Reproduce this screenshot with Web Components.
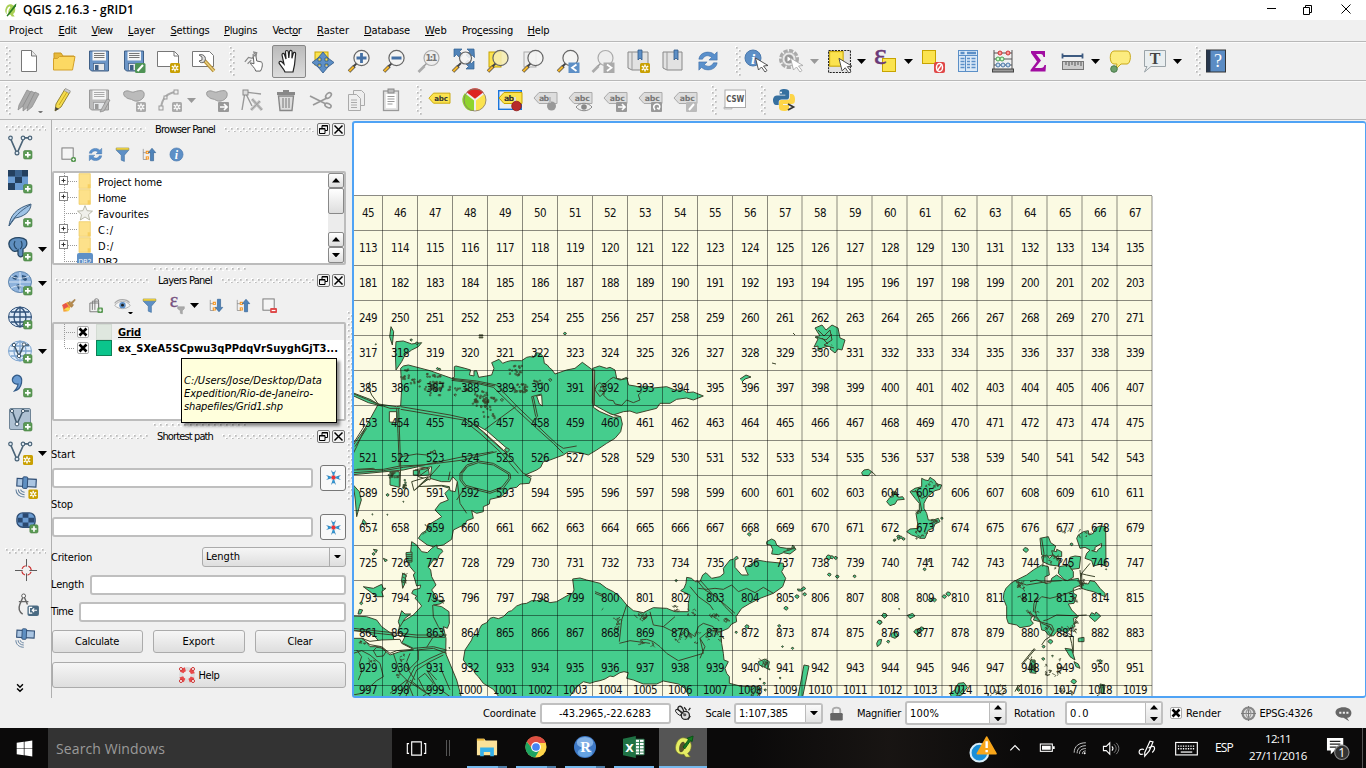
<!DOCTYPE html>
<html lang="en">
<head>
<meta charset="utf-8">
<title>QGIS 2.16.3 - gRID1</title>
<style>
html,body{margin:0;padding:0;width:1366px;height:768px;overflow:hidden;background:#f0f0f0}
</style>
</head>
<body>
<qgis-desktop></qgis-desktop>
<script>
/* ---------- icon library, 24 x 24 units ---------- */
const plus='<rect x="15.5" y="15.5" width="8.5" height="8.5" rx="1.5" fill="#5b9a55" stroke="#47803f" stroke-width=".6"/><path d="M19.8 17v5.600M17 19.800h5.600" stroke="#fff" stroke-width="1.700"/>';
const star='<rect x="14" y="14" width="10" height="10" rx="1.5" fill="#c9a002"/><path d="M19 15.500v7M15.800 17.200l6.400 3.600M15.800 20.800l6.400-3.600" stroke="#fff" stroke-width="1.500"/><circle cx="19" cy="19" r="1" fill="#c9a002"/>';
const gstar=star.replace(/#c9a002/g,'#aaa');
const lens=(h='#f2b52a',ex='',f='#f4f4f2',s='#666')=>`<path d="M2 22.500l5.500-5.500" stroke="#444" stroke-width="3.400"/><path d="M2.200 22.300l4.500-4.500" stroke="${h}" stroke-width="2.200"/><path d="M7 17l3-3" stroke="#444" stroke-width="1.800"/><circle cx="14.500" cy="9" r="7.600" fill="${f}" fill-opacity=".88" stroke="${s}" stroke-width="1.200"/>${ex}`;
const glens=(ex)=>`<path d="M1.500 23l6-6" stroke="#aaa" stroke-width="2.600"/><path d="M7 17l3-3" stroke="#999" stroke-width="1.500"/><circle cx="14.500" cy="9" r="7.500" fill="#eee" stroke="#aaa" stroke-width="1.200"/>${ex}`;
const floppy=(a,b,c)=>`<path d="M2.500 2h19v20H4.500l-2-2z" fill="${a}" stroke="${b}"/><rect x="5.500" y="2.500" width="13.500" height="9" fill="#f5f5f5"/><path d="M7 4.500h10.500M7 6.500h10.500M7 8.500h10.500" stroke="${c}" stroke-width="1"/><rect x="6.500" y="14.500" width="11" height="7" fill="#e6e8ea" stroke="${b}" stroke-width=".7"/><rect x="8" y="16" width="3.500" height="5" fill="${b}"/>`;
const tag=(f,s,t,txt='abc')=>`<path d="M1 11.500l5-5.500h18v11H6z" transform="translate(0 -1.500)" fill="${f}" stroke="${s}" stroke-width="1"/><text x="${txt=='abc'?14.300:11}" y="13" text-anchor="middle" font-family="DejaVu Sans,sans-serif" font-weight="bold" font-size="7.800" textLength="${txt=='abc'?15:10}" fill="${t}">${txt}</text>`;
const gtag=(t='abc')=>tag('#ddd','#aaa','#777',t);
const cursor='<path d="M11.500 9l3 12 3-3 3.500 5 2-1.500-3.500-4.500 4.500-.5z" fill="#fff" stroke="#444" stroke-width=".9"/>';
const vect='<path d="M2.500 3.500l6.500 15L15 5M15.500 2.800h6" fill="none" stroke="#4b6478" stroke-width="1.700"/><g fill="#dfe9f2" stroke="#4b6478" stroke-width="1.200"><circle cx="2.500" cy="3" r="1.800"/><circle cx="9" cy="18" r="1.900"/><circle cx="15" cy="3" r="1.800"/><circle cx="22" cy="3" r="1.800"/></g>';
const arrowBlue='<path d="M16 2l6 7h-3.500v13h-5V9H10z" fill="#4f83b9" stroke="#2f5f90"/>';
const treeBits='<path d="M2 3v17h6M2 9h6" stroke="#777" fill="none"/><rect x="6" y="6" width="5" height="5" fill="#f7941d"/><rect x="6" y="15" width="5" height="5" fill="#f7941d"/><circle cx="8.500" cy="8.500" r="1" fill="#fff"/><circle cx="8.500" cy="17.500" r="1" fill="#fff"/>';
const sat='<g transform="rotate(3 12 8)"><rect x="2" y="3" width="20" height="8" fill="#aac5e2" stroke="#2f4e75" stroke-width="1.200"/><rect x="8" y="1" width="5" height="12" rx="1" fill="#5e8fc2" stroke="#2f4e75"/></g><path d="M1 14c0 5 4 8 9 8M3.500 14c0 3 3 5.500 6.500 5.500M6 14c0 1.500 2 3 4 3" fill="none" stroke="#5f7d9c" stroke-width="1.100"/>';
const globe=(f,s)=>`<ellipse cx="12" cy="12" rx="11.500" ry="10" fill="${f}" stroke="${s}"/><path d="M12 2v20M1 12h22M3 7h18M3 17h18M12 2c-8 5-8 15 0 20M12 2c8 5 8 15 0 20" fill="none" stroke="${s}" stroke-width="1.300"/>`;
const hand='<path d="M8 23c-1-3-5-7-6-9 0-2 2-2 3-1l2 2-2-9c0-2 2-2 2.500-.5L9 10 8.500 3c0-2 2.500-2 2.800 0l.5 6 .7-6.500c.3-1.800 2.600-1.500 2.600.3l-.2 6.500 1.400-5c.6-1.500 2.500-1 2.300.7L17.500 16 16 23z" fill="#fff" stroke="#222" stroke-width="1.200"/>';
const ICONS={
logo:'<path d="M12 2c6 0 9 4 9 9 0 4-2 7-4 8l3 4h-5l-2-3C6 21 3 16 4 11s4-9 8-9z" fill="#a9cf55"/><path d="M9 19C6 17 8 9 12 7" stroke="#fff" stroke-width="3" fill="none"/><path d="M6 22L20 3l3-2-1 5L8 23z" fill="#287a20"/>',
new:'<path d="M4.500 1.500h10l5 5.500v15.500h-15z" fill="#fff" stroke="#777"/><path d="M14.500 1.500v5.500h5" fill="#e8e8e8" stroke="#777"/>',
open:'<path d="M2 4h7l2 3h11v5H2z" fill="#e7b83a" stroke="#c9971f"/><path d="M1.500 21V9.500h4l2-2H23l-2.500 13.500z" fill="#fcd963" stroke="#d3a02a"/>',
save:floppy('#6b95c7','#3f5f86','#777'),
saveas:floppy('#6b95c7','#3f5f86','#777')+'<rect x="13" y="14" width="10.500" height="10" rx="1.500" fill="#4e9355"/><path d="M15.500 22l5.500-6" stroke="#fff" stroke-width="2"/>',
composer:'<path d="M1.500 2.500h17l4 4v11h-21z" fill="#fff" stroke="#777"/><path d="M18 2.500v4.500h4.500" fill="none" stroke="#777"/>'+star,
manager:'<path d="M1.500 2.500h17l4 4v11h-21z" fill="#fff" stroke="#777"/><path d="M12 10l11 12" stroke="#b58e35" stroke-width="3.600"/><path d="M13 11l10 11" stroke="#e8cf7e" stroke-width="1.500"/><path d="M8 6c3-1 5 0 6 2s0 4-1 5-4 1-5-1l3-1V8z" fill="#ddd" stroke="#666"/>',
touch:'<path d="M13 23c-1-4-5-6-6-9l4 1L10 5c1-2 3-1 3 1l1 6 5 1c2 1 1 7-1 10z" transform="translate(1)" fill="#fff" stroke="#555"/><path d="M2 13l4-5 4 1 5-6M5 15l4-4M11 2l4 1-1 4" fill="none" stroke="#888" stroke-width="1.300"/>',
pan:hand,
move:'<rect x="4" y="3" width="13" height="13" fill="#fbe34f" stroke="#c7a400"/><path d="M12 3l5 6h-3v3h3V9l6 4.500-6 4.500v-3h-3v3h3l-5 6-5-6h3v-3H7v3L1 13.500 7 9v3h3V9H7z" fill="#5d8fc6" stroke="#2f5888" stroke-width=".8"/>',
zin:lens('#f2b52a','<path d="M14.500 4v10M9.500 9h10" stroke="#4470a5" stroke-width="2.800"/>'),
zout:lens('#f2b52a','<path d="M9.500 9h10" stroke="#4470a5" stroke-width="3"/>'),
z11:glens('<text x="14.500" y="12.300" text-anchor="middle" font-family="DejaVu Sans,sans-serif" font-weight="bold" font-size="8.500" textLength="12" fill="#777">1:1</text>'),
zfull:'<path d="M4 0h7L8.500 2.500 12 6l-3 3-3.500-3.500L3 8V0zM23 0h-7l2.500 2.500L15 6l3 3 3-3 2.500 2.500zM23 20h-8l2.500-2.500L14 14l3-3 3.500 3.500L23 12z" fill="#5083b8" stroke="#2f5f90" stroke-width=".7"/>'+lens().replace('r="7.600"','r="6"'),
zsel:'<rect x="3" y="3" width="12" height="15" fill="#fbe34f" stroke="#c7a400"/>'+lens('#f2b52a','','#f6edb0'),
zlay:'<rect x="3" y="3" width="12" height="15" fill="#eee" stroke="#aaa"/>'+lens(),
zlast:lens('#f2b52a','<rect x="12.500" y="13.500" width="11" height="10.500" fill="#5d8fc6"/><path d="M20.500 15.500l-4.500 3.300 4.500 3.300" fill="none" stroke="#fff" stroke-width="1.800"/>'),
znext:glens('<rect x="12.500" y="13.500" width="11" height="10.500" fill="#aaa"/><path d="M16 15.500l4.500 3.300-4.500 3.300" fill="none" stroke="#fff" stroke-width="1.800"/>'),
bnew:'<path d="M2 3h20v18H6l-4-2z" fill="#e2e2e2" stroke="#888"/><path d="M6 3v18" stroke="#999"/><path d="M12 1h4v10l-2-2-2 2z" fill="#5d8fc6" stroke="#2f5888" stroke-width=".8"/>'+star,
book:'<path d="M2 3h19v18H6l-4-2z" fill="#e2e2e2" stroke="#888"/><path d="M6 3v18" stroke="#999"/><path d="M13 1h4v10l-2-2-2 2z" fill="#5d8fc6" stroke="#2f5888" stroke-width=".8"/>',
refresh:'<path d="M2 10C3 2 14 0 19 5l3-3v9h-9l3-3C12 5 8 6 6 10zM22 14c-1 8-12 10-17 5l-3 3v-9h9l-3 3c4 3 8 2 10-2z" fill="#5a90cc" stroke="#3c6ba1" stroke-width=".6"/>',
ident:'<circle cx="9" cy="9" r="8" fill="#5d8fc6" stroke="#4a79ad"/><text x="9" y="14.500" text-anchor="middle" font-family="Liberation Serif,serif" font-weight="bold" font-style="italic" font-size="15" fill="#fff">i</text>'+cursor,
action:'<circle cx="10" cy="10" r="8.500" fill="none" stroke="#aaa" stroke-width="3" stroke-dasharray="4.200 1.500"/><circle cx="10" cy="10" r="7" fill="#e8e8e8" stroke="#aaa"/><circle cx="10" cy="10" r="4.500" fill="#999"/><path d="M8.500 7.500v5l4-2.500z" fill="#fff"/>'+cursor.replace('#444','#aaa'),
select:'<rect x="1.500" y="1.500" width="21" height="21" fill="#e2e2e2" stroke="#222" stroke-dasharray="2 1"/><rect x="2.500" y="2.500" width="13" height="14" fill="#fbe34f" stroke="#c7a400"/>'+cursor,
expr:'<rect x="9.500" y="9.500" width="13" height="13" fill="#fbe34f" stroke="#c7a400"/><text x="1" y="14.500" font-family="Liberation Serif,serif" font-size="30" stroke="#6a3a78" stroke-width=".5" fill="#6a3a78">ε</text>',
desel:'<rect x="1.500" y="1.500" width="13" height="13" fill="#fbe34f" stroke="#c7a400"/><rect x="13" y="13" width="11" height="11" rx="2" fill="#e04848"/><ellipse cx="18.500" cy="18.500" rx="3" ry="4" fill="none" stroke="#fff" stroke-width="1.500"/><path d="M16 22l5-7" stroke="#fff" stroke-width="1.300"/>',
table:'<rect x="2.500" y="1.500" width="19" height="21" fill="#dbe9f7" stroke="#5b8fc7"/><path d="M2.500 6.500h19M9.500 6.500v16" stroke="#5b8fc7"/><path d="M4.500 4h4M11 4h9" stroke="#5b8fc7" stroke-width="2.400"/><path d="M4.500 9.500h4M4.500 12.500h4M4.500 15.500h4M4.500 18.500h4M11 9.500h3M15.500 9.500h4M11 12.500h3M15.500 12.500h4M11 15.500h3M15.500 15.500h4M11 18.500h3M15.500 18.500h4" stroke="#5b8fc7" stroke-width="1.300"/>',
abacus:'<path d="M3 1v20M21 1v20M3 4h18M3 10h18M3 16h18" stroke="#555" fill="none"/><rect x="1.500" y="20" width="21" height="3" fill="#999" stroke="#444"/><g stroke="#c33" fill="#f99"><circle cx="9" cy="4" r="2"/><circle cx="17" cy="4" r="2"/></g><g stroke="#4a9b50" fill="#cfc"><circle cx="7" cy="10" r="2"/><circle cx="11" cy="10" r="2"/></g><g stroke="#4a76a8" fill="#cde"><circle cx="7" cy="16" r="2"/><circle cx="12" cy="16" r="2"/><circle cx="17" cy="16" r="2"/></g>',
sigma:'<path d="M5 2h14v6h-1.500c-.5-2-1-3-3-3H10l5 6.500L9 19h6c2 0 3-1 3.500-3H20l-.5 6.500H4.500V21L11 12.500 5 4z" fill="#a10da1"/>',
ruler:'<path d="M1.500 7h20M1.500 4.500v5M21.500 4.500v5" stroke="#3d5a80" stroke-width="1.800"/><rect x="1.500" y="12.500" width="21" height="8" fill="#ccc" stroke="#777"/><path d="M5 13v3M8 13v4M11 13v3M14 13v4M17 13v3M20 13v4" stroke="#555"/>',
tip:'<path d="M6 2h13c5 0 4 13 0 13h-6l-5 5 1-5H6c-5 0-5-13 0-13z" fill="#fcec7f" stroke="#c9a91a"/><circle cx="6" cy="20" r="3.300" fill="#6c9f6c" stroke="#4b7b4b"/>',
annot:'<path d="M1.500 1.500h21v16H8L1.500 23l2.500-5.500H1.500z" fill="#e9eef0" stroke="#9aa3a8"/><text x="12" y="15" text-anchor="middle" font-family="Liberation Serif,serif" font-weight="bold" font-size="16" fill="#444">T</text>',
help:'<rect x="2.500" y="1" width="19" height="22" fill="#5b8cc4" stroke="#333"/><rect x="2.500" y="1" width="4" height="22" fill="#26364c"/><text x="14" y="18" text-anchor="middle" font-family="Liberation Serif,serif" font-size="18" fill="#fff">?</text>',
edits:'<g fill="#aaa" stroke="#888" stroke-width=".7"><path d="M2 17L10 2l4 2-8 14-5 4z"/><path d="M6 18l8-15 4 2-7 14-5 4z"/><path d="M11 18l7-14 4 2-7 13-5 4z"/></g>',
pencil:'<path d="M5 16L14 1l5 3-9 15-6 4z" fill="#f5dc4e" stroke="#8a7a2a" stroke-width=".9"/><path d="M13 2.500l5 3 1.500-2.500-5-2.500z" fill="#ccc" stroke="#888" stroke-width=".6"/><path d="M8 17L16 4" stroke="#c9a91a"/><path d="M4 23l.5-4 3.500 2z" fill="#444"/>',
gsave:floppy('#bbb','#999','#aaa')+'<path d="M14 22l6-11 3 1-6 11-4 1z" fill="#bbb" stroke="#888" stroke-width=".7"/>',
blob:'<path d="M3 3c4-3 7 1 10 0s9-3 10 1-2 7-6 8-6-2-8-2-8-3-6-7z" fill="#bbb" stroke="#999" transform="translate(-1 1)"/>',
curve:'<path d="M3 20C4 10 9 5 18 4" fill="none" stroke="#aaa" stroke-width="2"/><g fill="#eee" stroke="#999"><rect x="1" y="18" width="4" height="4"/><rect x="16" y="2" width="4" height="4"/><rect x="6" y="8" width="3" height="3"/></g>'+gstar,
node:'<path d="M2 22L5 4l16 2M5 4l7 14" fill="none" stroke="#999" stroke-width="1.400"/><rect x="3" y="2" width="5" height="5" fill="#ddd" stroke="#888"/><path d="M11 22l9-9M12 11l10 11" stroke="#bbb" stroke-width="3"/><path d="M11 22l9-9M12 11l10 11" stroke="#999" stroke-width=".8"/>',
trash:'<path d="M9 2h6v2h6v3H3V4h6z" fill="#888"/><path d="M4.500 8h15L18 22.500H6z" fill="#ddd" stroke="#888" stroke-width="1.400"/><path d="M9 10v10M12 10v10M15 10v10" stroke="#999" stroke-width="1.500"/>',
cut:'<path d="M1 8l16 8M4 17l14-7" stroke="#999" stroke-width="1.800"/><g fill="none" stroke="#999" stroke-width="1.600"><ellipse cx="19.500" cy="7.500" rx="3.300" ry="2.200" transform="rotate(-45 19.500 7.500)"/><ellipse cx="19" cy="17.500" rx="3.300" ry="2" transform="rotate(25 19 17.500)"/></g>',
copy:'<g fill="#eee" stroke="#aaa"><path d="M9.500 2.500h8l3 3v12h-11z"/><path d="M4.500 6.500h8l4 4v12h-12z"/><path d="M7 12h6M7 14.500h6M7 17h6M7 19.500h6"/></g>',
paste:'<rect x="4.500" y="3" width="15" height="19.500" fill="#e4e4e4" stroke="#999" stroke-width="1.300"/><rect x="9" y="1" width="6" height="4" fill="#bbb" stroke="#888"/><rect x="7" y="6" width="10" height="14" fill="#fff"/><path d="M8.500 8.500h7M8.500 11h7M8.500 13.500h7M8.500 16h5" stroke="#999"/>',
abc:tag('#fbe34f','#c7a400','#333'),
pie:'<circle cx="12" cy="12" r="11" fill="#fbe34f"/><path d="M12 12L2 5a11 11 0 0 0 9.500 18z" fill="#8ed42c"/><path d="M12 12L3 5a11 11 0 0 1 18 0z" fill="#dd2222"/><path d="M12 12L3 5M12 12l9-7M12 12v11" stroke="#eee" stroke-width="2"/><circle cx="12" cy="12" r="11" fill="none" stroke="#876" stroke-width=".8"/>',
abpin:'<rect x=".7" y="2.700" width="22.600" height="18.600" fill="#e9eef4" stroke="#1a75dc" stroke-width="1.400"/>'+tag('#fbe34f','#c7a400','#333','ab')+'<path d="M17 9v6" stroke="#ddd" stroke-width="2"/><circle cx="18.500" cy="18" r="4.800" fill="#b72a2a" stroke="#8b1a1a" stroke-width=".8"/>',
gpin:gtag('ab')+'<circle cx="18.500" cy="18" r="4.500" fill="#999"/><path d="M17 9v6" stroke="#bbb" stroke-width="2"/>',
geye:gtag()+'<path d="M8 19c4-5 12-5 16 0-4 5-12 5-16 0z" fill="#eee" stroke="#888"/><circle cx="16" cy="19" r="2.800" fill="#888"/>',
gmove:gtag()+'<rect x="13" y="14" width="11" height="10" rx="1" fill="#999"/><path d="M15 19h7M19 16l3 3-3 3" fill="none" stroke="#fff" stroke-width="1.700"/>',
grot:gtag()+'<rect x="13" y="14" width="11" height="10" rx="1" fill="#999"/><path d="M17 22c-3-4 0-6 2-6s4 2 2 5l-2-1" fill="none" stroke="#fff" stroke-width="1.500"/>',
gedit:gtag()+'<rect x="13" y="14" width="11" height="10" rx="1" fill="#bbb"/><path d="M16 22l5-6" stroke="#fff" stroke-width="2"/>',
csw:'<path d="M1 21h8v-2H1z" fill="#ddd" stroke="#aaa" stroke-width=".6"/><rect x="2" y="2" width="20.500" height="17.500" fill="#fff" stroke="#aaa"/><text x="12.200" y="14" text-anchor="middle" font-family="DejaVu Sans,sans-serif" font-weight="bold" font-size="9" textLength="18" lengthAdjust="spacingAndGlyphs" fill="#555">CSW</text>',
python:'<path d="M12 1c-4 0-5 1-5 3v3h6v1H4c-3 0-4 3-4 5s1 5 3 5h3v-3c0-2 1-3 3-3h6c1 0 2-1 2-3V4c0-2-2-3-5-3z" fill="#3670a0" transform="translate(1) scale(.95)"/><path d="M12 23c4 0 5-1 5-3v-3h-6v-1h9c3 0 3-3 3-5s-1-5-3-5h-2v3c0 2-1 3-3 3H9c-1 0-2 1-2 3v5c0 2 2 3 5 3z" fill="#fdd548"/><circle cx="9" cy="4.500" r="1" fill="#fff"/><path d="M16 16l5.500 3-5.500 3" stroke="#333" stroke-width="1.700" fill="none"/>',
vec:vect+plus,vecnew:vect+star.replace('x="14"','x="15"'),
raster:'<rect x="0" y="1" width="20" height="20" fill="#6a9bd1"/><path d="M0 1h7v6.500H0zM14 1h6v6.500h-6zM7 7.500h7V14H7zM0 14h7v7H0z" fill="#24405f"/><path d="M7 1h7v6.500H7z" fill="#3b628d"/>'+plus,
feather:'<path d="M1 23C2 13 8 5 23 1c0 8-8 13-16 14z" fill="#9fc3e6" stroke="#40607f"/><path d="M1 23C6 14 12 8 22 2" stroke="#40607f" fill="none"/>'+plus,
elephant:'<path d="M4 2c4-2 11-2 14 1 2 4 0 8-3 9v6c-1 3-5 2-5-1v-4c-2 2-5 2-7-1-3-3-3-8 1-10z" fill="#5f8fc0" stroke="#274764" stroke-width="1.300"/><path d="M7 4c-2 4 0 7 2 8M13 4c2 3 1 7-1 8" fill="none" stroke="#274764" stroke-width="1.200"/>'+plus,
wglobe:'<ellipse cx="12" cy="11" rx="11.500" ry="10.500" fill="#8db2dc" stroke="#5f86ad"/><path d="M4 6l4-2 2 2-2 3-3-1zM14 4l4 1 1 4-2 1-3-2zM8 14l3-1 2 3-2 3z" fill="#2f557e"/><path d="M12 1v20M1 11h22M3 5c5 3 13 3 18 0M3 17c5-3 13-3 18 0" stroke="#dce9f6" fill="none" stroke-width=".9"/>'+plus,
wms:globe('#dbe8f6','#2d4f78')+plus,
wfs:globe('#e3eef9','#7fa6d0')+'<path d="M6 6l5 11 5-11h5" fill="none" stroke="#40586c" stroke-width="1.500"/><g fill="#fff" stroke="#40586c"><circle cx="6" cy="6" r="1.700"/><circle cx="11" cy="17" r="1.700"/><circle cx="16" cy="5.500" r="1.700"/></g>'+plus,
comma:'<path d="M5.500 4c3.500-4 9.500-1 8 6-.8 4-3 7-7 8 2.500-3 3.500-5 3.500-7-5 1-7-4-4.500-7z" fill="#6a9bd1" stroke="#325a87" stroke-width="1.200"/>'+plus,
vbox:'<rect x="1.500" y="1.500" width="21" height="21" rx="1.500" fill="#afc1d3" stroke="#6f8496"/><path d="M4 3l5 14 6-13h6" fill="none" stroke="#40586c" stroke-width="1.500"/><g fill="#fff" stroke="#40586c"><circle cx="4" cy="4" r="1.600"/><circle cx="9" cy="17" r="1.900"/><circle cx="15" cy="4" r="1.600"/></g>'+plus,
sat:sat,satnew:sat+star,
rball:'<rect x="2" y="3" width="19" height="15" rx="6" fill="#6a9bd1" stroke="#2f4e75" stroke-width="1.400"/><path d="M8 3.500h6V8H8zM3 8h5v5H3zM14 8h6v5h-6zM8 13h6v4.500H8z" fill="#2b4970"/>'+plus,
cross:'<path d="M12 0v8M12 15v8M0 12h8M15 12h8" stroke="#555"/><circle cx="12" cy="12" r="5" fill="none" stroke="#c33" stroke-width="1.300" stroke-dasharray="5 2.850" stroke-dashoffset="-1.500"/>',
compass:'<g transform="translate(2 0)"><circle cx="7" cy="3" r="2" fill="#fff" stroke="#555"/><path d="M6 5L3 12M8 5l3 7M2 9h10M3 12c-2 5 0 8 3 10" fill="none" stroke="#666" stroke-width="1.500"/><rect x="11" y="13" width="12" height="11" rx="2" fill="#4a6a82"/><path d="M16 15h-3v6h3M21 18h-5M18 16l-2 2 2 2" stroke="#fff" fill="none" stroke-width="1.200"/></g>',
addrect:'<rect x="1.500" y="1.500" width="18" height="18" fill="#f5f5f5" stroke="#777" stroke-width="1.500"/><rect x="16" y="16" width="8" height="8" rx="3" fill="#5b9a55"/><path d="M20 18v4M18 20h4" stroke="#fff" stroke-width="1.300"/>',
rmrect:'<rect x="1.500" y="1.500" width="18" height="18" fill="#f5f5f5" stroke="#777" stroke-width="1.500"/><rect x="13" y="16" width="11" height="8" rx="1.500" fill="#df4a4a"/><path d="M15.500 20h6" stroke="#fff" stroke-width="1.800"/>',
filter:'<path d="M2 2h20v3l-7 8v10l-5-2v-8L2 5z" fill="#5d8fc6" stroke="#40709f"/><path d="M2 1.500h20v3H2z" fill="#f2d442" stroke="#bfa21b" stroke-width=".6"/>',
up:treeBits+arrowBlue,down:treeBits+'<g transform="matrix(1 0 0 -1 0 24)">'+arrowBlue+'</g>',
info:'<circle cx="12" cy="12" r="10.500" fill="#5d8fc6" stroke="#4a79ad"/><text x="12" y="18.500" text-anchor="middle" font-family="Liberation Serif,serif" font-weight="bold" font-style="italic" font-size="19" fill="#fff">i</text>',
brush:'<path d="M2 11l9-5 5 7-5 8-7 1z" fill="#f5a33c"/><path d="M2 11l6-3 4 5-7 5z" fill="#e8554d"/><path d="M5 18l7 3 3-4-5-2z" fill="#f6dc4a"/><path d="M11 8l6 7 3-4-2-2 5-6-1-1-6 5-2-2z" fill="#b98d4f" stroke="#8a6430" stroke-width=".8"/>',
group:'<path d="M3 8v14h14V8zM7 5h10M11 2v17M7 5v14M17 5v14M11 2c4-2 6 0 6 3" fill="none" stroke="#777" stroke-width="1.500"/><rect x="15" y="15" width="9" height="9" rx="2" fill="#5b9a55"/><path d="M19.500 17v5M17 19.500h5" stroke="#fff" stroke-width="1.500"/>',
eye:'<path d="M1 12c6-8 16-8 22 0-6 6-16 6-22 0z" fill="#f5f5f5" stroke="#999"/><circle cx="12" cy="11.500" r="4.500" fill="#5d8fc6"/><circle cx="12" cy="11.500" r="2" fill="#222"/><path d="M1 9c5-7 16-7 21-1" fill="none" stroke="#aaa" stroke-width="1.700"/>',
efilter:'<text x="1" y="13.500" font-family="Liberation Serif,serif" font-size="30" stroke="#75507f" stroke-width=".5" fill="#75507f">ε</text><path d="M13 13h10v3l-3 3v5l-3-1v-4l-4-3z" fill="#aaa" stroke="#888" stroke-width=".6"/>',
folder:'<path d="M3 1h17v22H3z" fill="#fde18a" stroke="#ecc75e"/><path d="M20 14v9h-4v-6h4z" fill="#f7cf60"/>',
fav:'<path d="M12 1l3.200 7.500 8 .700-6 5.300 1.800 8L12 18l-7 4.500 1.800-8-6-5.300 8-.700z" fill="#f0f0ea" stroke="#a8a896" stroke-width="1.200"/>',
db2:'<rect x="0" y="0" width="24" height="24" rx="3" fill="#5f90c6"/><text x="12" y="16" text-anchor="middle" font-family="DejaVu Sans Condensed,sans-serif" font-size="10.500" fill="#fff">DB2</text>',
pick:'<path d="M8.500 0c0 3.500 1.500 5 2.300 8h2.400c.8-3 2.300-4.500 2.300-8L13 3.500V9h-2V3.500z" id="a" fill="#2f7fb8"/><g fill="#2f7fb8"><path d="M8.500 24c0-3.500 1.500-5 2.300-8h2.400c.8 3 2.300 4.500 2.300 8L13 20.500h-2z"/><path d="M0 8.500c3.500 0 5 1.500 8 2.300v2.400c-3 .8-4.500 2.300-8 2.300L3.500 13v-2z"/><path d="M24 8.500c-3.500 0-5 1.500-8 2.300v2.400c3 .8 4.500 2.300 8 2.300L20.500 13v-2z"/></g><path d="M12 3v18M3 12h18" stroke="#2f9ad8" stroke-width="2.200"/><rect x="9" y="9" width="6" height="6" fill="#e33"/>',
life:'<circle cx="12" cy="12" r="9" fill="none" stroke="#ddd" stroke-width="6"/><circle cx="12" cy="12" r="9" fill="none" stroke="#e84a4a" stroke-width="6" stroke-dasharray="7 7.140" stroke-dashoffset="-3.500"/><g fill="#fff" stroke="#c33" stroke-width="1.500"><circle cx="3" cy="3" r="2.300"/><circle cx="21" cy="3" r="2.300"/><circle cx="3" cy="21" r="2.300"/><circle cx="21" cy="21" r="2.300"/></g>',
chev:'<path d="M5 3l7 7 7-7M5 13l7 7 7-7" fill="none" stroke="#000" stroke-width="3.500"/>',
bug:'<ellipse cx="8" cy="8" rx="4" ry="8" fill="#e0e0e0" stroke="#222" stroke-width="2" transform="rotate(-20 8 8)"/><ellipse cx="4" cy="10" rx="3" ry="6" fill="#e8e8e8" stroke="#222" stroke-width="1.500" transform="rotate(-45 4 10)"/><circle cx="15" cy="15" r="6.500" fill="#ddd" stroke="#222" stroke-width="2"/><circle cx="14" cy="14" r="2.500" fill="#555"/><path d="M2 5l10 7M13 2l4 5M20 7l3-4M19 22l4-6" stroke="#222" stroke-width="2"/>',
lock:'<path d="M6 13V7c0-6 12-6 12 0v6" fill="none" stroke="#aaa" stroke-width="3"/><rect x="2" y="11" width="20" height="12" rx="2" fill="#666"/>',
crs:'<circle cx="12" cy="12" r="9.500" fill="#ddd" stroke="#888" stroke-width="3.500"/><path d="M12 0v24M0 12h24" stroke="#777" stroke-width="1.500"/><path d="M12 4c-5 5-5 11 0 16M12 4c5 5 5 11 0 16" stroke="#999" stroke-width="1.700" fill="none"/>',
msg:'<path d="M12 3c14 0 14 14 5 15l3 5-8-5C-3 17-3 3 12 3z" fill="#666"/><path d="M6 9.500h3v3H6zM11 9.500h3v3h-3zM16 9.500h3v3h-3z" fill="#eee"/>',
win:'<path d="M1 4l10-1.500V11.500H1zM12 2.300L23 .8v10.700H12zM1 12.500h10v9L1 20zM12 12.500h11v10.700L12 21.700z" fill="#fff"/>',
tview:'<path d="M6.500 4.500h11v15h-11zM3.500 6.500h-2v11h2M20.500 6.500h2v11h-2" fill="none" stroke="#fff" stroke-width="1.300"/>',
expl:'<path d="M1 3h8l1.500 2H23v16H1z" fill="#fbe29a"/><path d="M1 3h8v2H1z" fill="#e8b43a"/><path d="M4.500 22V12.500h15V22h-4v-4.500h-7V22z" fill="#35b0ea"/>',
chrome:'<circle cx="12" cy="12" r="11.500" fill="#ffd54a"/><path d="M2 6a11.500 11.500 0 0 0 9 17.400L16 15l-8-1z" fill="#1da462"/><path d="M2 6a11.500 11.500 0 0 1 20.700 1.500H12l-4 6z" fill="#dd4f43"/><circle cx="12" cy="12" r="5.400" fill="#fff"/><circle cx="12" cy="12" r="4.200" fill="#4585f3"/>',
rs:'<circle cx="12" cy="12" r="12" fill="#3e79c6"/><ellipse cx="12" cy="7" rx="9" ry="6" fill="#82b1e6"/><ellipse cx="12" cy="18" rx="8" ry="5" fill="#66a4e2"/><text x="12.500" y="17" text-anchor="middle" font-family="Liberation Serif,serif" font-weight="bold" font-size="16" fill="#fff">R</text>',
excel:'<path d="M13 3.500h10v17H13z" fill="#fff" stroke="#217346"/><path d="M14 7h9M14 10.500h9M14 14h9M14 17.500h9M18 4v16" stroke="#217346"/><path d="M0 3l14-3v24L0 21z" fill="#1f7244"/><text x="7" y="17" text-anchor="middle" font-family="DejaVu Sans,sans-serif" font-weight="bold" font-size="12" fill="#fff">X</text>',
qg:'<path d="M12 2c6 0 9 4 9 9 0 4-2 7-4 8l3 4h-5l-2-3C6 21 3 16 4 11s4-9 8-9z" fill="#e6ee64" stroke="#777a28" stroke-width=".7"/><ellipse cx="11" cy="12" rx="3" ry="6" fill="#56522b" transform="rotate(15 11 12)"/><path d="M12 12l6-8-1.500-1.500L23 0l-1 6-1.800-1L14 14z" fill="#167a22" stroke="#095114"/>',
warn:'<circle cx="9" cy="16" r="8.500" fill="#188fd8" stroke="#d8eefa" stroke-width="2"/><path d="M16 1l9 16H7z" fill="#f9a61a" stroke="#f9a61a" stroke-width="1.500" stroke-linejoin="round"/><path d="M16 5v6.500M16 13.500v2" stroke="#fff" stroke-width="2.300"/>',
tchev:'<path d="M4 16l8-8 8 8" fill="none" stroke="#fff" stroke-width="2"/>',
batt:'<rect x="2" y="6" width="18" height="11" fill="none" stroke="#fff" stroke-width="1.600"/><path d="M4.500 8.500h13v6h-13zM21 9.500h2.500v4H21z" fill="#fff"/>',
wifi:'<g fill="none" stroke="#ddd" stroke-width="1.500"><path d="M2 20C2 9 10 3 22 3M7 21c0-8 6-13 15-13M11 22c0-6 4-9 11-9M16 22c0-3 2-5 6-5"/></g><circle cx="20" cy="21" r="1.700" fill="#fff"/>',
vol:'<path d="M2 9h4l5-5v16l-5-5H2z" fill="none" stroke="#fff" stroke-width="1.500"/><path d="M14 9c2 2 2 4 0 6" stroke="#fff" stroke-width="1.500" fill="none"/><path d="M17 6c4 4 4 8 0 12M20 4c5 5 5 11 0 16" stroke="#888" stroke-width="1.300" fill="none"/>',
pen:'<path d="M7 20c-8 3-7-9 1-6M9 18L16 3l4 1-5 12-6 7zM14 12c9-6 10 1 5 6" fill="none" stroke="#fff" stroke-width="1.600"/>',
kbd:'<rect x=".7" y="5.700" width="22.600" height="13" fill="none" stroke="#fff" stroke-width="1.200"/><path d="M3 9.500h18M3 12.200h18" stroke="#fff" stroke-width="1.500" stroke-dasharray="1.400 1.200"/><path d="M6 15.700h12" stroke="#fff" stroke-width="1.300"/>',
note:'<path d="M1 1h17v13H9l-4 4v-4H1z" fill="#fff"/><path d="M4 4.500h11M4 7.500h11M4 10.500h7" stroke="#222" stroke-width="1.200"/><circle cx="16.500" cy="16" r="7.500" fill="#333" stroke="#888" stroke-width="1.200"/><text x="16.500" y="20.500" text-anchor="middle" font-family="Open Sans,sans-serif" font-size="13" fill="#fff">1</text>'
};
ICONS.gblob=ICONS.blob+gstar;
ICONS.gblobmove=ICONS.blob+'<rect x="13" y="14" width="11" height="10" rx="1" fill="#999"/><path d="M15 19h7M19 16l3 3-3 3" fill="none" stroke="#fff" stroke-width="1.700"/>';

/* ---------- helpers ---------- */
const define=(name,css,html,after)=>customElements.define(name,class extends HTMLElement{
  connectedCallback(){
    if(this.shadowRoot)return;
    const root=this.attachShadow({mode:'open'});
    root.innerHTML=`<style>${css}</style>${typeof html==='function'?html(this):html}`;
    if(after)after(this,root);
  }
});
/* Places items on a row by their centres, turning the distances into flow margins. */
const strip=(start,list)=>{let x=start;return list.map(([c,w,h])=>{const m=c-w/2-x;x=c+w/2;return `<span class="it" style="width:${w}px;margin-left:${m}px">${h}</span>`}).join('')};
const ic=(n,s=24)=>`<q-icon name="${n}" size="${s}"></q-icon>`;
const arrow=(g)=>`<q-arrow${g?' style="color:#999"':''}></q-arrow>`;
const IT='.it{flex:none;display:flex;align-items:center;justify-content:center}';

define('q-icon',':host{display:block;flex:none}svg{display:block;overflow:visible}',e=>{const s=e.getAttribute('size')||24;return `<svg width="${s}" height="${s}" viewBox="0 0 24 24">${ICONS[e.getAttribute('name')]}</svg>`});
define('q-arrow',':host{display:block;flex:none;color:#000}svg{display:block}',e=>{const s=e.getAttribute('size')||9;return `<svg width="${s}" height="${s*5/9}" viewBox="0 0 9 5"><path d="${e.hasAttribute('up')?'M0 5h9L4.500 0z':'M0 0h9L4.500 5z'}" fill="currentColor"/></svg>`});
/* Single line text tracked to a given width. */
define('q-text',':host{display:block;flex:none;white-space:nowrap}span{display:inline}','<span><slot></slot></span>',(e,r)=>{
  const w=+e.getAttribute('w'),n=e.textContent.length,s=r.querySelector('span');
  if(w){e.style.letterSpacing=((w-s.getBoundingClientRect().width)/n).toFixed(3)+'px';e.style.width=w+'px'}
});
define('q-grip',':host{display:block;flex:none}svg{display:block}',e=>{
  const w=e.getAttribute('w')||5,h=e.getAttribute('h')||5;
  return `<svg width="${w}" height="${h}"><defs><pattern id="p" width="6" height="6" patternUnits="userSpaceOnUse"><path d="M0 0h2v2H0zM3 3h2v2H3z" fill="#fff"/><path d="M1 1h1.700v1.700H1zM4 4h1.700v1.700H4z" fill="#bcbcbc"/></pattern></defs><rect width="100%" height="100%" fill="url(#p)"/></svg>`});

define('title-bar',`:host{display:flex;height:20px;background:#fff;align-items:center;font:600 12px "Open Sans",sans-serif;color:#000}q-text{margin-left:6px;height:19px;line-height:18px}svg{display:block;margin-left:1127px}q-icon{margin-left:8px}`,
`<q-icon name="logo" size="14" style="margin-left:3px"></q-icon><q-text w="111">QGIS 2.16.3 - gRID1</q-text><svg width="100" height="16" fill="none" stroke="#000" style="flex:none"><path d="M6 6.500h9"/><path d="M42.500 5.500h6v7h-6zM44.500 5V3.500h6v7H49" /><path d="M80.500 2.500l9 9M89.500 2.500l-9 9"/></svg>`);

define('menu-bar',`:host{display:flex;align-items:center;height:20px;padding-top:1px;border-bottom:1px solid #b8b8b8;box-sizing:content-box;color:#000}${IT}u{text-underline-offset:1px}q-text{line-height:16px}`,
strip(0,[[26,34,'Project'],[67.500,18,'Edit'],[102,21,'View'],[141.500,27,'Layer'],[190,39,'Settings'],[240.500,33,'Plugins'],[287,29,'Vector'],[333,32,'Raster'],[387,46,'Database'],[436,22,'Web'],[487.500,51,'Processing'],[538.500,22,'Help']].map(([c,w,t])=>{
 const k={Project:3,Vector:4,Processing:3}[t]||0;return [c,w,`<q-text w="${w}">${t.slice(0,k)}<u>${t[k]}</u>${t.slice(k+1)}</q-text>`]})));

define('tool-bar',`:host{display:flex;align-items:center;height:39px;padding-bottom:1px;border-bottom:1px solid #b8b8b8;border-top:1px solid #fafafa;box-sizing:border-box}${IT}.on{width:32px;height:31px;border:1px solid #888;border-radius:2px;background:linear-gradient(#bbb,#dcdcdc);display:flex;align-items:center;justify-content:center}`,
e=>{
 const g=c=>[c,6,'<q-grip w="6" h="30"></q-grip>'],i=(n,c,s=24)=>[c,s,ic(n,s)],a=(c,x)=>[c,9,arrow(x)];
 return e.getAttribute('set')==='main'?strip(0,[g(8),i('new',29),i('open',64),i('save',99),i('saveas',134),i('composer',168),i('manager',203),g(232),i('touch',254,22),[289,34,`<div class="on">${ic('pan',24)}</div>`],i('move',323),i('zin',359),i('zout',394),i('z11',429),i('zfull',463),i('zsel',498),i('zlay',533),i('zlast',568),i('znext',603),i('bnew',638),i('book',673),i('refresh',708,22),g(738),i('ident',756),i('action',791),a(814.500,1),i('select',839,25),a(861.500),i('expr',885),a(908),i('desel',933),i('table',967.500),i('abacus',1002.500),i('sigma',1038),i('ruler',1073),a(1095.500),i('tip',1120),i('annot',1155),a(1177.500),g(1198),i('help',1216)])
 :strip(0,[g(8),i('edits',29),[40.500,5,'<q-arrow size="5" style="color:#777;margin-top:24px"></q-arrow>'],i('pencil',63),i('gsave',99),i('gblob',134),i('curve',170),a(191.500,1),i('gblobmove',217),i('node',252),i('trash',286),i('cut',321),i('copy',356),i('paste',391),g(419),i('abc',439,22),i('pie',475),i('abpin',510),i('gpin',545),i('geye',580),i('gmove',615),i('grot',650),i('gedit',685),g(714),i('csw',735),g(762.500),i('python',784)]);
});

define('side-bar',`:host{display:flex;flex-direction:column;width:51px;border-right:1px solid #b0b0b0;box-sizing:content-box;align-items:flex-start}.r{height:34px;display:flex;align-items:center;width:51px;flex:none}.r q-arrow{margin-left:6px}q-icon{margin-left:8px}.w q-icon{margin-left:15px}q-grip{margin-left:5px}`,
'<q-grip w="41" h="6" style="margin-top:5px;margin-bottom:-1px"></q-grip>'+
[['vec'],['raster'],['feather'],['elephant',1],['wglobe',1],['wms'],['wfs',1],['comma'],['vbox'],['vecnew',1]].map(([n,a])=>`<div class="r">${ic(n)}${a?arrow():''}</div>`).join('')+
['satnew','rball'].map(n=>`<div class="r w">${ic(n,23)}</div>`).join('')+
'<q-grip w="41" h="6" style="margin-top:10px;margin-bottom:-1px"></q-grip>'+
['cross','compass','sat'].map(n=>`<div class="r w">${ic(n,n=='sat'?21:23)}</div>`).join('')+`<div class="r w" style="padding-top:16px">${ic('chev',10)}</div>`);

define('panel-title',`:host{display:flex;align-items:center;height:18px}q-text{text-align:center}.b{width:13px;height:13px;box-sizing:border-box;border:1px solid #777;border-radius:2px;background:#f3f3f3;margin-left:2px;display:block;flex:none}.b svg{display:block}`,
e=>{const w=+e.getAttribute('w'),g=Math.round((259-w-18)/2);return `<q-grip w="${g}" h="5" style="margin-left:3px"></q-grip><q-text style="margin:0 9px" w="${w}">${e.getAttribute('text')}</q-text><q-grip w="${g-1}" h="5"></q-grip><span class="b" style="margin-left:auto"><svg width="11" height="11" fill="none" stroke="#000"><path d="M4 4V1.500h5.500v5H7M1.500 4.500H7v5H1.500zM1 5h6M4 2h6"/></svg></span><span class="b" style="margin-right:2px"><svg width="11" height="11" fill="none" stroke="#000" stroke-width="1.500"><path d="M1.500 1.500l8 8M9.500 1.500l-8 8"/></svg></span>`});

define('tree-list',`:host{display:block;box-sizing:border-box;border:2px solid #bcbcbc;border-radius:2px;background:#fff;width:294px;height:94px}.w{display:flex;height:90px}.l{flex:1;overflow:hidden}.row{display:flex;height:16px;align-items:center}.row q-text{padding-top:2px}.tw{width:23px;height:16px;flex:none}.tw svg{display:block}.row q-icon{margin-right:5px}.sb{width:16px;display:flex;flex-direction:column;background:#ececec}.k{height:15px;box-sizing:border-box;border:1px solid #888;border-radius:2px;background:linear-gradient(#fff,#ddd);display:flex;align-items:center;justify-content:center;flex:none}.t{height:26px}.f{flex:1}`,
`<div class="w"><div class="l">${[['folder','Project home',64,1],['folder','Home',28,1],['fav','Favourites',51,0],['folder','C:/',16,1],['folder','D:/',16,1],['db2','DB2',20,0]].map(([i,t,w,p])=>`<div class="row"><span class="tw"><svg width="23" height="16" fill="none"><path d="M10.500 0v16M12 8.500h11" stroke="#999" stroke-dasharray="1 1"/>${p?'<rect x="5.500" y="3.500" width="8" height="8" fill="#fff" stroke="#888"/><path d="M7.500 7.500h4M9.500 5.500v4" stroke="#333"/>':''}</svg></span>${ic(i,16)}<q-text w="${w}">${t}</q-text></div>`).join('')}</div><div class="sb"><div class="k"><q-arrow up size="8"></q-arrow></div><div class="k t"></div><div class="f"></div><div class="k"><q-arrow up size="8"></q-arrow></div><div class="k" style="height:16px"><q-arrow size="8"></q-arrow></div></div></div>`);

define('check-box',':host{display:block;flex:none;width:12px;height:12px;box-sizing:border-box;border:1px solid #aaa;border-radius:2px;background:#fff}svg{display:block}','<svg width="10" height="10" stroke="#000" stroke-width="2.600"><path d="M1.500 1.500l7 7M8.500 1.500l-7 7"/></svg>');

define('layer-list',`:host{display:block;position:relative;box-sizing:border-box;border:2px solid #bcbcbc;border-radius:2px;background:#fff;width:294px;height:99px;font-weight:bold}.row{display:flex;height:16px;align-items:center}.row q-text{padding-top:1px}.row.a{background:#f0f0f0}.tw{display:block;width:23px;height:16px;flex:none}.sw{width:16px;height:16px;box-sizing:border-box;margin:0 6px 0 7px;flex:none}.tip{position:absolute;z-index:5;left:127px;top:34px;width:156px;height:65px;box-sizing:border-box;border:1px solid #000;background:#ffffdc;box-shadow:3px 3px 3px rgba(0,0,0,.45);font-weight:normal;font-style:italic;padding:15px 0 0 2px;line-height:13px}`,
`<div class="row a"><span class="tw"><svg width="24" height="16"><path d="M10.500 0v16M12 8.500h9" stroke="#999" stroke-dasharray="1 1"/></svg></span><check-box></check-box><span class="sw" style="background:#dfe7df;border:1px solid #d3dbd3"></span><q-text w="23" style="text-decoration:underline">Grid</q-text></div>
<div class="row"><span class="tw"><svg width="24" height="16"><path d="M10.500 0v8M11 8.500h10" stroke="#999" stroke-dasharray="1 1" fill="none"/></svg></span><check-box></check-box><span class="sw" style="background:#0bc58c;border:1px solid #0d7f55"></span><q-text w="220">ex_SXeA5SCpwu3qPPdqVrSuyghGjT3...</q-text></div>
<div class="tip"><q-text w="138">C:/Users/Jose/Desktop/Data</q-text><q-text w="129">Expedition/Rio-de-Janeiro-</q-text><q-text w="99">shapefiles/Grid1.shp</q-text></div>`);

define('path-form',`:host{display:block;width:294px}.r{display:flex;align-items:center}.in{display:block;box-sizing:border-box;height:20px;border:2px solid #bfbfbf;border-radius:3px;background:#fff;flex:1;min-width:0}.btn{display:flex;align-items:center;justify-content:center;box-sizing:border-box;border:1px solid #ababab;border-radius:3px;background:linear-gradient(#f6f6f6,#dedede);flex:none;gap:3px}.p{width:26px;height:26px;margin-left:7px;background:#f8f8f8;border-color:#777}.lb{height:18px}.cmb{width:144px;height:20px;justify-content:flex-start;margin-left:auto}.cmb q-text{margin-left:3px}.dv{border-left:1px solid #ababab;height:100%;width:15px;margin-left:auto;display:flex;align-items:center;justify-content:center}q-text{margin-left:-1px}`,
`<div class="r lb"><q-text w="24">Start</q-text></div><div class="r" style="height:29px"><span class="in"></span><span class="btn p">${ic('pick',15)}</span></div>
<div class="r lb" style="margin-top:3px"><q-text w="22">Stop</q-text></div><div class="r" style="height:28px"><span class="in"></span><span class="btn p">${ic('pick',15)}</span></div>
<div class="r" style="height:29px;padding-top:1px;box-sizing:content-box"><q-text w="41" style="padding-top:1px">Criterion</q-text><span class="btn cmb"><q-text w="34">Length</q-text><span class="dv"><q-arrow size="7"></q-arrow></span></span></div>
<div class="r" style="height:27px"><q-text w="33">Length</q-text><span class="in" style="margin-left:6px"></span></div>
<div class="r" style="height:27px"><q-text w="22">Time</q-text><span class="in" style="margin-left:6px"></span></div>
<div class="r" style="height:33px;justify-content:space-between"><span class="btn" style="width:91px;height:23px"><q-text w="44">Calculate</q-text></span><span class="btn" style="width:92px;height:23px"><q-text w="32">Export</q-text></span><span class="btn" style="width:91px;height:23px"><q-text w="25">Clear</q-text></span></div>
<div class="r" style="height:34px"><span class="btn" style="width:294px;height:26px">${ic('life',16)}<q-text w="21" style="margin-left:1px">Help</q-text></span></div>`);

define('dock-area',`:host{display:block;width:295px}.tb{display:flex;height:33px;align-items:center}.g{display:flex;height:7px;align-items:center;justify-content:center}${IT}`,
`<panel-title text="Browser Panel" w="60"></panel-title><div class="tb">${strip(52,['addrect','refresh','filter','up','info'].map((n,i)=>[68+i*27,16,ic(n,15)]))}</div>
<tree-list></tree-list><div class="g"><q-grip w="93" h="4"></q-grip></div>
<panel-title text="Layers Panel" w="54" style="height:17px"></panel-title><div class="tb">${strip(52,[[68,16,ic('brush',15)],[95,16,ic('group',15)],[122,18,ic('eye',17)],[130,5,'<q-arrow size="5" style="margin-top:15px"></q-arrow>'],[149,16,ic('filter',15)],[177,16,ic('efilter',16)],[194.500,9,arrow()],[216,16,ic('down',15)],[243,16,ic('up',15)],[269,16,ic('rmrect',15)]])}</div>
<layer-list></layer-list><div class="g"><q-grip w="93" h="4"></q-grip></div>
<panel-title text="Shortest path" w="56" style="height:17px"></panel-title><path-form></path-form>`);

/* ---------- map ---------- */
const P=(s,x='')=>`<path d="M${s}z" ${x}/>`;
const L=s=>`<path d="M${s}" fill="none"/>`;
const W=s=>P(s,'fill="#fbfae3"');
function specks(list){return list.map(([x,y,r=2])=>{r*=.8;return `<path d="M${x-r} ${y}l${r*.8}-${r} ${r*1.100} ${r*.3} ${r*.4} ${r*.8}-${r} ${r*.9}z"/>`}).join('')}
/* Small building footprints scattered in a box; the seed keeps them fixed. */
function houses(x,y,w,h,n,seed){let s='',r=seed*7919;const f=()=>(r=(r*16807)%2147483647)/2147483647;f();for(let i=0;i<n;i++){const a=x+f()*w,b=y+f()*h;s+=`M${a.toFixed(1)} ${b.toFixed(1)}h${(3+f()*2).toFixed(1)}v${(3+f()*2).toFixed(1)}h-4z`}return `<path d="${s}" stroke-width="2.200"/>`}
function squiggle(x,y,w,h,n,seed){let r=seed*7919;const f=()=>(r=(r*16807)%2147483647)/2147483647;f();let s='';for(let i=0;i<n;i++){s+=`M${(x+f()*w).toFixed(1)} ${(y+f()*h).toFixed(1)}`;for(let j=0;j<4;j++)s+=`l${(f()*12-6).toFixed(1)} ${(f()*11-5.500).toFixed(1)}`}return `<path d="${s}" fill="none" stroke-width="2.300"/>`}
function land(){
 const A=
 P('160,198 175,195 240,212 305,235 313,232 313,200 318,198 345,205 362,210 358,225 372,228 372,213 380,212 386,232 410,228 425,225 432,205 425,188 447,178 458,190 470,185 482,182 515,182 530,172 540,170 552,172 558,158 570,160 580,170 583,190 592,195 600,205 605,208 615,222 650,210 675,205 697,187 728,210 727,310 740,330 775,345 812,350 817,372 812,395 795,415 770,430 740,450 715,465 690,458 655,455 640,465 600,480 580,485 572,502 560,510 525,525 543,535 538,550 510,552 500,562 480,565 455,590 420,598 418,612 400,620 400,635 380,640 365,632 370,655 350,662 345,675 330,680 310,690 305,718 280,735 250,740 232,735 205,715 215,700 228,692 235,675 260,660 275,650 255,630 270,610 295,600 285,580 300,565 275,558 200,558 235,530 190,525 195,510 240,505 205,500 160,510 10,524 10,435 45,385 85,312 140,320 152,318 155,265 152,205')
 +P('728,205 748,198 770,205 780,202 795,210 800,235 815,238 830,232 836,255 855,258 870,262 890,258 910,264 950,260 975,270 1000,270 1010,278 1030,276 1060,288 1030,300 1010,294 980,298 960,310 930,310 920,325 900,330 860,340 840,333 820,335 790,345 760,332 740,325 728,308')
 +P('123,80 131,95 127,135 119,110')+P('138,125 160,123 185,132 215,128 205,140 185,150 165,165 155,185 138,210 136,160')
 +P('0,275 60,298 95,318 55,308 0,283')+P('120,515 148,515 148,562 120,555')+P('10,555 28,575 34,600 28,620 20,650 16,600')
 +W('118,335 140,335 140,368 118,366')+W('560,288 575,285 577,318 568,312')
 +L('330,520 350,495 385,483 430,490 480,520 482,535 460,565 420,580 380,570 345,560 330,540z')+L('336,521 353,499 385,488 430,495 475,522 477,534 456,561 420,575 380,565 348,556 336,540z')
 +W('729,210 734,210 733,315 760,330 782,342 812,350 790,352 750,335 730,322')
 +W('192,565 240,535 275,545 300,545 308,530 322,545 316,575 300,572 298,560 275,556 200,560')+W('240,540 205,530 203,508 245,500')+P('208,510 235,505 238,525 210,527')+P('190,511 205,511 205,525 190,525')
 +W('375,372 410,392 465,440 475,448 470,458 455,448 400,398')+W('185,545 235,530 192,572')
 +L('152,320 200,328 300,345 345,355 400,395 460,450 520,520 545,530')+L('152,328 200,336 300,353 340,360 390,400 450,455 505,520')
 +L('305,235 380,243 440,255 500,318 560,375 620,432 640,445 680,438')+L('305,241 380,250 430,262 500,330 560,385 610,430 640,460')+L('308,238 380,247 435,258')
 +L('500,318 440,362 405,388')+L('10,518 100,512 160,502 260,490 340,480 440,455')+L('10,510 100,508 150,498 220,495 330,472 430,455')+L('20,508 70,505 78,510')
 +L('140,325 144,400 148,500')+L('146,325 152,500 150,560')+L('60,245 55,262 65,285 85,312')+L('45,385 20,440 10,460')
 +L('545,290 575,282 M545,290 556,345 562,360')+L('155,470 200,462 230,465 255,450 258,462 240,455')+L('0,277 50,298 90,315 120,325 150,325')+L('550,290 563,350')
 +L('332,520 350,500 M350,555 320,600 M322,545 330,610 350,640 M300,515 295,540')+L('240,505 205,530 M195,570 230,540 270,495')+L('10,430 45,375 M15,440 50,385')
 +L('740,255 750,248 760,258 765,275 750,290 735,270z')+L('760,270 758,258 770,248 780,238 790,232 810,240 835,235')+L('760,285 775,300 790,302 795,312 815,316 830,300 850,308 870,300 865,285 875,275')
 +squiggle(740,250,25,35,6,9)
 +houses(225,218,50,12,10,7)+houses(228,235,50,50,20,12)+houses(180,235,30,15,9,17)+houses(205,255,95,15,16,27)+houses(310,262,50,10,10,5)+houses(365,272,45,45,34,91)+houses(385,290,60,14,16,93)+houses(475,195,40,30,16,33)+houses(490,250,40,25,24,55)+houses(550,240,30,15,8,58)+houses(390,315,45,40,12,3)+houses(150,205,25,30,10,66)+houses(113,515,30,16,14,44)+houses(155,538,15,35,10,21)
 +L('390,102v14M396,102v14M386,106h14M386,112h14')+specks([[77,133],[644,101,5],[183,120,4],[200,130,5],[262,206,4],[268,208,4],[315,285,4],[600,240,5],[470,450,8],[455,300,5],[460,275,4]]);
 const B=
 P('185,185 200,195 215,215 232,218 245,205 260,195 262,205 275,208 278,215 268,225 262,240 250,240 235,262 242,270 245,290 258,315 245,330 255,345 260,360 285,362 270,372 250,375 275,380 297,395 298,430 292,445 280,440 288,475 287,520 320,600 335,655 5,655 5,475 40,475 60,500 90,500 120,525 150,515 190,510 155,490 165,470 145,455 150,430 190,405 215,378 205,365 195,355 200,348 185,340 190,330 210,325 212,315 200,318 195,300 190,285 195,278 180,260 175,240 182,215')
 +P('5,408 50,410 80,420 95,440 130,465 132,495 118,503 95,493 75,470 50,455 5,450')
 +P('40,320 70,325 95,313 100,325 108,325 95,335 100,350 80,350 60,335')+P('155,392 165,402 182,402 165,415 150,440 145,425')+P('40,118 48,128 44,136 36,130')+P('100,235 112,240 106,246')+P('28,388 38,390 32,402 24,402')+P('70,208 82,210 78,218')+specks([[160,65],[112,104],[67,103],[70,222,5],[33,370,5],[298,504],[78,150,3],[112,45,5]])
 +P('158,280 168,285 165,310 158,325 155,300')+P('168,218 186,216 186,246 170,246')+L('168,224h18M168,230h18M168,236h18M168,241h18')
 +W('35,475 60,484 95,480 150,478 155,490 190,508 140,512 120,520 95,500 60,494')
 +P('345,510 365,480 368,470 385,460 388,448 395,435 410,428 420,415 430,412 445,416 460,410 475,395 485,392 500,378 515,372 530,370 545,362 560,362 580,358 600,368 620,365 655,345 668,340 672,330 668,297 690,294 710,300 750,310 770,325 790,335 810,350 830,375 850,392 880,398 910,383 950,385 975,395 1015,395 1015,370 1020,345 992,332 1002,325 1008,310 1010,292 1025,295 1035,305 1050,305 1058,285 1068,278 1085,295 1110,290 1122,280 1120,265 1140,240 1150,238 1160,228 1165,235 1155,240 1155,262 1175,285 1195,285 1190,275 1185,262 1200,255 1220,240 1250,245 1300,250 1302,262 1295,275 1307,295 1298,320 1270,340 1230,355 1200,370 1175,385 1158,410 1160,425 1145,432 1135,445 1112,455 1115,490 1120,520 1122,540 1135,545 1125,565 1130,580 1138,590 1138,610 1155,614 1170,618 1200,620 1228,620 1230,640 1215,655 1020,655 1005,625 985,612 940,603 920,612 880,612 850,600 830,595 835,578 822,575 810,578 790,590 780,588 765,597 750,602 735,605 720,610 700,605 680,620 655,655 450,655 430,628 400,610 385,590 375,580 372,570 355,560 340,540')
 +L('10,445 100,455 200,465 290,465')+L('10,452 100,462 200,472 285,472')+L('160,490 190,505 250,500 290,510 M200,510 250,505 290,520')+L('165,655 200,570 240,545 280,525 M145,655 195,560 240,535 285,515 M120,640 170,600 230,640 210,655 M230,570 260,620 300,650 M180,600 250,655 M270,560 300,630')
 +L('248,375 250,410 265,440 285,470')+L('250,470 230,502')+L('70,512 80,502 100,505 108,515 100,528 80,530z')+L('10,520 35,512 60,525 90,550 100,590 80,602 60,620 35,640 10,645')+L('20,510 35,530 28,550 35,575 25,600')+L('130,520 140,550 150,580 170,600 190,650')+L('205,512 205,540 175,570 195,600')+L('180,520 170,545 180,570 165,560')+L('205,595 225,580 250,610 225,635z M235,572 260,600')
 +L('830,375 815,420 808,485 M808,490 840,482 900,490 M735,335 760,345 M735,340 760,350 M760,385 755,390')
 +L('1045,325 1070,328 1095,325 1120,328 1145,315 1165,335 1190,325 1215,338 1240,322 1270,340 M1040,300 1065,330 1100,350 1125,380 1150,405 M1050,300 1090,345 1130,378 1155,400 M1020,320 1045,350 1080,375 1090,390 M900,395 910,435 940,440 975,410 M940,440 970,455 1000,445 1035,470 1045,440 1060,430 1090,440 M1115,455 1080,450 1050,475 1065,500 1050,535 M1050,475 1060,520 985,542 950,520 930,500 910,485 890,478 870,480')
 +squiggle(1015,385,20,18,5,12)+squiggle(1085,395,15,20,9,98)+squiggle(1120,415,15,10,6,92)+squiggle(980,455,70,30,16,31)+squiggle(1075,450,40,30,12,19)+squiggle(970,380,15,15,6,29)+squiggle(862,400,28,16,14,41)+squiggle(795,415,14,38,10,61)+squiggle(865,485,45,10,5,71)+squiggle(50,520,20,40,4,81)+squiggle(150,525,25,30,5,51)+squiggle(225,140,15,15,4,14)+squiggle(155,280,15,45,6,15)+squiggle(255,355,25,12,3,11)+squiggle(30,480,15,12,4,8)+squiggle(140,585,10,10,3,88);
 const C=P('500,185 515,177 525,182 530,195 540,202 560,205 575,205 578,195 588,208 570,222 550,218 535,224 515,222 518,208 512,195 500,193')+L('550,215 570,210 585,200')+L('560,208 585,206')
 +P('475,545 495,537 508,545 505,562 510,570 490,560 478,555')+squiggle(480,542,20,14,8,41)+P('612,555 627,558 608,650 594,650')+P('592,327 602,328 612,320 617,326 606,333 595,333')
 +specks([[447,163,6],[440,440,7],[408,457,4],[557,385,7],[590,350,7],[613,343,6],[537,438,5],[547,500,3],[577,505,4],[480,597,3],[492,610,4],[540,594,3],[687,284,6],[711,290,6],[763,289,5],[685,232,9],[706,234,6],[695,232,6],[228,302,4],[882,182,3],[895,170,6],[852,407,9],[838,427,8],[495,630,4]])+squiggle(455,624,25,20,10,12)+P('835,480 845,478 842,492 832,500 830,490')+P('875,460 888,455 895,468 885,475 873,470');
 const D=
 P('185,55 195,60 205,62 210,52 225,62 230,72 245,75 240,88 225,92 215,100 205,108 198,118 192,130 192,145 200,160 205,180 220,180 235,175 240,185 225,192 220,205 205,210 195,235 180,235 170,230 155,225 140,215 150,207 175,205 172,185 168,160 178,150 178,130 165,115 150,95 165,85 185,80')+L('155,95 170,95 180,125 185,150 180,160')+L('165,90 185,115 195,110')+squiggle(200,62,12,15,3,12)+squiggle(225,75,12,8,4,42)+squiggle(215,180,18,12,8,22)+squiggle(160,210,40,20,6,24)+squiggle(172,150,8,12,4,21)
 +P('80,125 90,112 100,110 95,97 108,95 115,112 128,110 133,118 112,120 105,132 90,137')+squiggle(95,98,15,6,4,43)+P('5,38 12,30 25,28 35,35 25,47 8,46')+L('35,35 47,46')
 +P('540,235 565,230 572,248 587,258 578,285 560,290 545,285')+P('575,272 590,275 590,268 605,275 605,290 580,290')+P('650,235 655,225 670,215 685,212 687,225 700,220 705,205 720,198 737,200 738,318 720,313 700,318 695,302 675,295 680,280 690,270 675,262 660,265')+W('695,272 705,270 705,262 725,250 724,262 715,268 710,276')
 +P('470,360 500,345 520,330 545,315 565,320 568,345 555,350 555,370 572,368 575,355 590,345 615,362 655,355 662,375 640,385 640,400 650,405 642,430 625,432 635,450 655,470 640,475 645,500 632,505 620,520 605,512 590,515 580,528 565,525 555,512 545,510 540,485 520,480 525,470 505,455 515,470 512,480 520,490 510,498 480,503 470,495 445,490 440,475 440,440 430,415 432,398 438,385 455,368')
 +P('545,290 560,285 568,295 580,285 598,300 595,318 570,315 548,305')+P('598,320 625,315 640,335 640,352 622,362 612,358 595,340')+P('630,292 645,288 662,290 658,325 635,328 625,310')+P('665,370 685,372 690,362 705,365 720,385 735,400 735,410 700,395 680,390 665,385')+P('688,470 695,458 705,463 708,456 722,468 705,485')+P('615,565 635,568 645,600 630,590')+P('142,466 158,460 165,468 150,476')+P('512,600 525,600 528,640 510,638 508,620')
 +L('523,565 485,612 M526,567 488,613 M545,235 552,280 548,320 M600,520 630,530 635,550 640,580 M545,555 555,540 570,530 578,515 570,500 545,490 530,470 525,450 530,425 545,410 570,415 610,405 640,392 660,385 M524,468 540,485 575,495 582,510 570,530 M520,455 522,430 535,412 M550,482 560,480 590,465 640,467 680,465 M660,340 680,345 705,350 M605,362 560,365 500,375 470,365 M660,330 665,385 M560,370 530,360 510,365 M690,310 665,340 660,380 M640,575 640,530 625,520')
 +squiggle(470,365,22,22,14,7)+squiggle(475,405,22,15,6,72)+squiggle(630,410,25,15,6,28)+squiggle(605,500,45,20,9,88)+squiggle(545,275,50,25,6,18)+squiggle(505,450,15,20,6,27)+squiggle(645,470,10,25,6,26)+squiggle(655,215,30,15,5,38)+squiggle(510,598,15,35,14,17)+squiggle(545,615,35,30,9,36)+squiggle(592,600,10,40,8,37)+squiggle(570,300,45,30,5,39)+squiggle(550,500,25,15,5,86)+squiggle(655,365,20,20,9,34)+squiggle(715,600,15,6,3,85)+squiggle(610,212,18,5,3,35)
 +P('270,700 285,690 295,670 312,668 322,682 305,705 275,712')+L('300,675 290,710 M310,685 300,700')+squiggle(400,678,35,28,9,33)+squiggle(370,700,20,8,3,30)+squiggle(580,690,60,15,8,63)+L('465,695 475,675 470,690 485,672')+P('720,672 735,675 732,700 725,700')+P('642,605 655,612 660,625 648,620')+P('655,535 672,532 672,545 655,545')+squiggle(205,297,10,6,4,25)+squiggle(715,680,15,20,4,64)
 +specks([[496,270,9],[104,240,4],[115,235,5],[122,232,5],[130,237,5],[193,328,5],[72,467,9],[57,487,8],[117,447],[170,516,11],[184,507,8],[222,420,7],[210,420,6],[252,410,7],[264,402,8],[634,253,5],[570,545,8],[550,560,5],[720,603,5],[577,588,3],[549,597,5],[738,328],[245,175,4],[640,665,9],[475,690,5],[84,545,5]]);
 const g=(x,y,s)=>`<g transform="translate(${x} ${y}) scale(.33333)">${s}</g>`;
 return `<g fill="#45cd8d" stroke="#3d442b" stroke-width="3" stroke-linejoin="round">${g(350,300,A)}${g(350,480,B)}${g(600,480,C)}${g(860,460,D)}
 <g stroke-width="1"><path d="M815 328l7-3 4 5 6-5 6 3 2 10 5 2-3 10-4-1-3 4-5-4 2-4-10 3-4 3 0-5-4 1 4-8-3-2 5-1z"/><path d="M818 330l6 6 6-6 2 10-8 5 10 3M822 338l6 6M816 337l10 3 6-6M740 379l6-4 5 2-6 2-3 3 2 2"/><path d="M772 363l4 1M793 333l2 2M753 353l2 1"/></g></g>`;
}
define('map-canvas',':host{display:block;box-sizing:border-box;width:1014px;height:577px;margin-top:1px;border:2px solid #4fa3f5;border-right-width:1px;border-radius:3px;background:#fff;overflow:hidden}svg{display:block}text{font:11.500px "DejaVu Sans Condensed","DejaVu Sans",sans-serif;letter-spacing:-.55px;fill:#111}',()=>{
 let lines='',txt='';
 for(let c=0;c<23;c++)lines+=`M${382.500+35*c-(c>11?.5:0)} 196V696`;
 for(let r=0;r<15;r++){lines+=`M354 ${196+35*r-.5}H1152`;for(let c=0;c<23;c++)txt+=`<text x="${c?365+35*c:368}" y="${r===14?694:217+35*r}" text-anchor="middle">${45+68*r+c}</text>`}
 return `<svg width="1011" height="573" viewBox="354 123 1011 573"><path d="M354 195.500h798v500H354z" fill="#fbfae3"/>${land()}<path d="${lines}" fill="none" stroke="#000" stroke-opacity=".45"/>${txt}</svg>`});

define('status-bar',`:host{display:flex;align-items:center;height:30px;color:#000}${IT}.f{box-sizing:border-box;border:2px solid #c0c0c0;border-radius:3px;background:#fff;display:flex;align-items:center;width:100%;height:21px}.s{height:24px}.f q-text{margin-left:3px}.d{margin-left:auto;width:15px;height:100%;border-left:1px solid #bbb;background:linear-gradient(#fafafa,#e2e2e2);display:flex;flex-direction:column;gap:7px;align-items:center;justify-content:center}q-text{padding-top:1px}`,
strip(0,[[509.500,53,'<q-text w="53">Coordinate</q-text>'],[605.500,131,'<div class="f"><q-text w="92" style="margin-left:17px">-43.2965,-22.6283</q-text></div>'],[683,15,ic('bug',15)],[718,26,'<q-text w="25">Scale</q-text>'],[778.500,89,'<div class="f"><q-text w="49">1:107,385</q-text><span class="d"><q-arrow size="8"></q-arrow></span></div>'],[836,15,ic('lock',15)],[879,44,'<q-text w="44">Magnifier</q-text>'],[956,102,'<div class="f s"><q-text w="29">100%</q-text><span class="d"><q-arrow up size="8"></q-arrow><q-arrow size="8"></q-arrow></span></div>'],[1034.500,41,'<q-text w="41">Rotation</q-text>'],[1114,98,'<div class="f s"><q-text w="20">0.0</q-text><span class="d"><q-arrow up size="8"></q-arrow><q-arrow size="8"></q-arrow></span></div>'],[1175.500,12,'<check-box></check-box>'],[1203.500,35,'<q-text w="35">Render</q-text>'],[1248,15,ic('crs',15)],[1286,54,'<q-text w="53">EPSG:4326</q-text>'],[1343,17,ic('msg',17)]]));

define('task-app',':host{display:flex;flex-direction:column;width:100%;height:40px;align-items:center}.i{flex:1;display:flex;align-items:center}.u{height:2px;width:40px;background:#76b9ed;display:flex;justify-content:flex-end}.u i{width:9px;background:#4f7ea8}:host([on]){background:#555}:host([on]) .u{width:100%}',
e=>`<div class="i">${ic(e.getAttribute('name'),22)}</div><div class="u">${e.hasAttribute('multi')?'<i></i>':''}</div>`);
define('task-bar',`:host{display:flex;align-items:center;height:40px;background:#0b0a0a linear-gradient(90deg,transparent 55%,rgba(70,58,50,.22) 65%,transparent 75%);font-family:"Open Sans",sans-serif;color:#fff}${IT}.se{width:344px;height:40px;background:#333;color:#9a9a9a;font-size:14px;display:flex;align-items:center}.se q-text{margin-left:8px}.ck{font-size:11.500px;line-height:17px;display:flex;flex-direction:column;align-items:center;padding-bottom:2px}.v{display:flex;gap:2px}.v i{width:1px;height:16px;background:#555}`,
strip(0,[[24,17,ic('win',17)],[220,344,'<div class="se"><q-text w="109">Search Windows</q-text></div>'],[416,22,ic('tview',21)],[448,5,'<span class="v"><i></i><i></i></span>'],[487,40,'<task-app name="expl" multi></task-app>'],[536,40,'<task-app name="chrome" multi></task-app>'],[585,40,'<task-app name="rs" multi></task-app>'],[634,40,'<task-app name="excel"></task-app>'],[683,48,'<task-app name="qg" on></task-app>'],[982,26,ic('warn',25)],[1015,14,ic('tchev',14)],[1047,16,ic('batt',16)],[1080,14,ic('wifi',14)],[1110.500,17,ic('vol',17)],[1147,18,ic('pen',18)],[1186.500,23,ic('kbd',23)],[1224,20,'<q-text w="18" style="font-size:12px;padding-bottom:2px">ESP</q-text>'],[1278,60,'<div class="ck"><q-text w="26">12:11</q-text><q-text w="58">27/11/2016</q-text></div>'],[1337,24,ic('note',23)],[1362,1,'<i style="width:1px;height:40px;background:#555"></i>']]));

define('qgis-desktop',`:host{display:flex;flex-direction:column;width:1366px;height:768px;background:#f0f0f0;font:11px "DejaVu Sans Condensed","DejaVu Sans",sans-serif;color:#000;overflow:hidden}.main{display:flex;height:578px;flex:none}.sp{width:5px;display:flex;align-items:center;justify-content:center;padding-bottom:8px}tool-bar,menu-bar,title-bar{flex:none}`,
`<title-bar></title-bar><menu-bar></menu-bar><tool-bar set="main"></tool-bar><tool-bar set="edit"></tool-bar><div class="main"><side-bar></side-bar><dock-area></dock-area><div class="sp"><q-grip w="5" h="189"></q-grip></div><map-canvas></map-canvas></div><status-bar></status-bar><task-bar></task-bar>`);
</script>
</body>
</html>
